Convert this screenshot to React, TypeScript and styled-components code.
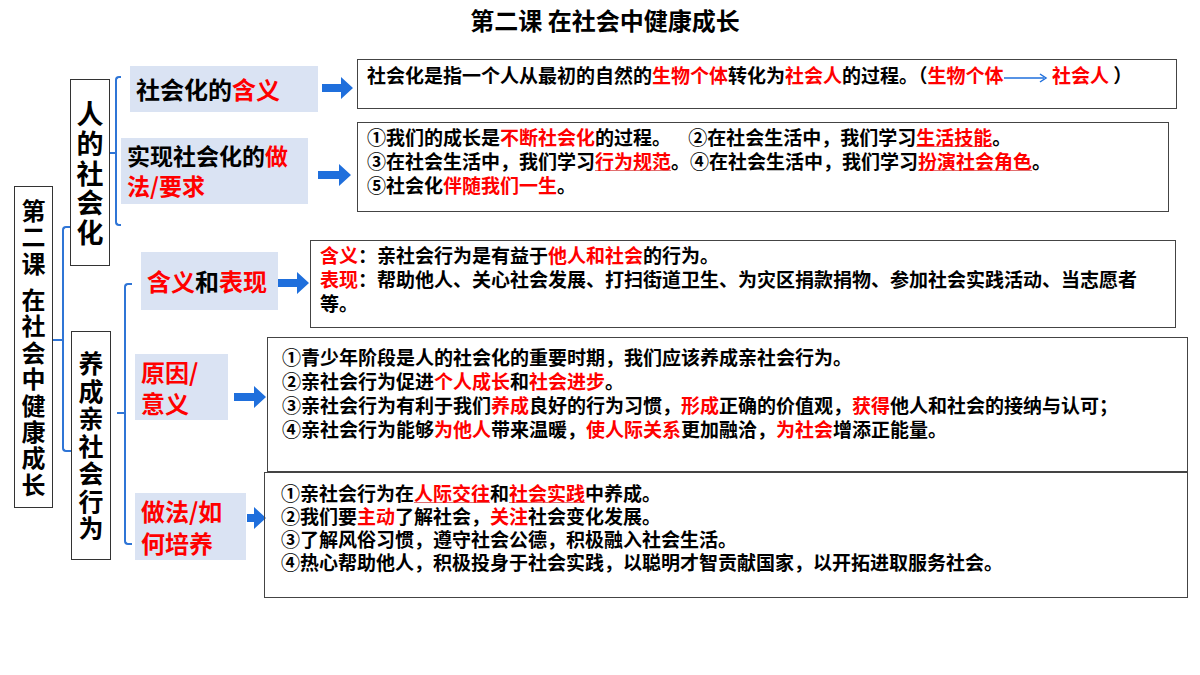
import * as React from 'react';
import styled, { createGlobalStyle } from 'styled-components';

const Global = createGlobalStyle`
  html, body { margin: 0; background: #fff; }
  body { font-family: "Noto Sans CJK SC", "Liberation Sans", sans-serif; }
`;

const Slide = styled.div`
  position: relative;
  width: 1200px;
  height: 675px;
  overflow: hidden;
  background: #fff;
`;

const Title = styled.h1`
  margin: 0;
  padding-top: 2px;
  padding-left: 10px;
  text-align: center;
  font-size: 24px;
  font-weight: 700;
  color: #000;
`;

const Node = styled.div<{ x: number; y: number; w: number; h: number }>`
  position: absolute;
  left: ${p => p.x}px;
  top: ${p => p.y}px;
  width: ${p => p.w}px;
  height: ${p => p.h}px;
  box-sizing: border-box;
`;

const VBox = styled(Node)<{ size: number }>`
  border: 1.5px solid #333;
  display: flex;
  align-items: center;
  justify-content: center;
  font-size: ${p => p.size}px;
  font-weight: 700;
  line-height: 1.1;
  text-align: center;
  & span { display: block; width: 1em; }
`;

const Label = styled(Node)<{ size: number }>`
  background: #dae3f3;
  font-size: ${p => p.size}px;
  font-weight: 700;
  line-height: 1.3;
  padding: 4px 6px;
  display: flex;
  align-items: center;
  white-space: nowrap;
`;

const TextBox = styled(Node)<{ lh: number }>`
  border: 1.5px solid #444;
  padding: 2px 9px;
  font-size: 19px;
  font-weight: 700;
  line-height: ${p => p.lh}px;
  color: #000;
`;

const Red = styled.span<{ u?: boolean }>`
  color: #ff0000;
  text-decoration: ${p => (p.u ? 'underline' : 'none')};
  text-decoration-color: #e07070;
`;

const Bracket = styled(Node)`
  border: 2px solid #2f75d6;
  border-right: none;
  border-radius: 4px 0 0 4px;
`;

const Tick = styled(Node)`
  background: #2f75d6;
`;

const Arrow = ({ x, y, w }: { x: number; y: number; w: number }) => (
  <Node x={x} y={y - 12} w={w} h={24}>
    <svg width={w} height={24} viewBox={`0 0 ${w} 24`}>
      <polygon points={`0,8 ${w - 12},8 ${w - 12},1 ${w},12 ${w - 12},23 ${w - 12},16 0,16`} fill="#1f6fdc" />
    </svg>
  </Node>
);

const Vert = ({ text }: { text: string }) => <>{text.split('').map((c, i) => <span key={i}>{c}</span>)}</>;

export default function App() {
  return (
    <Slide>
      <Global />
      <Title>第二课 在社会中健康成长</Title>

      <VBox x={14} y={186} w={39} h={322} size={24}><div><Vert text="第二课" /><span style={{ height: 10 }} /><Vert text="在社会中健康成长" /></div></VBox>
      <Bracket x={62} y={226} w={9} h={226} />
      <Tick x={53} y={339} w={9} h={2} />

      <VBox x={70} y={79} w={40} h={187} size={27}><div><Vert text="人的社会化" /></div></VBox>
      <VBox x={71} y={331} w={40} h={229} size={25}><div><Vert text="养成亲社会行为" /></div></VBox>

      <Bracket x={115} y={76} w={6} h={150} />
      <Tick x={110} y={152} w={5} h={2} />
      <Bracket x={124} y={283} w={8} h={262} />
      <Tick x={117} y={412} w={7} h={2} />

      <Label x={130} y={66} w={188} h={46} size={24}>社会化的<Red>含义</Red></Label>
      <Label x={121} y={138} w={187} h={66} size={23}><div>实现社会化的<Red>做</Red><br /><Red>法/要求</Red></div></Label>
      <Label x={141} y={252} w={137} h={58} size={24}><div><Red>含义</Red>和<Red>表现</Red></div></Label>
      <Label x={135} y={354} w={93} h={66} size={24}><div><Red>原因/</Red><br /><Red>意义</Red></div></Label>
      <Label x={135} y={493} w={111} h={67} size={24}><div><Red>做法/如</Red><br /><Red>何培养</Red></div></Label>

      <Arrow x={322} y={88} w={31} />
      <Arrow x={318} y={175} w={33} />
      <Arrow x={278} y={283} w={31} />
      <Arrow x={234} y={397} w={32} />
      <Arrow x={247} y={518} w={19} />

      <TextBox x={357} y={59} w={820} h={50} lh={26}>
        社会化是指一个人从最初的自然的<Red>生物个体</Red>转化为<Red>社会人</Red>的过程。（<Red>生物个体</Red>
        <svg width="44" height="10" viewBox="0 0 44 10" style={{ verticalAlign: 'middle' }}><line x1="0" y1="5" x2="40" y2="5" stroke="#1f6fdc" strokeWidth="1.5" /><polyline points="36,1 42,5 36,9" fill="none" stroke="#1f6fdc" strokeWidth="1.5" /></svg>
        &nbsp;<Red>社会人</Red> ）
      </TextBox>
      <TextBox x={357} y={122} w={812} h={90} lh={24}>
        ①我们的成长是<Red>不断社会化</Red>的过程。&nbsp;&nbsp;&nbsp;&nbsp;②在社会生活中，我们学习<Red u>生活技能</Red>。<br />
        ③在社会生活中，我们学习<Red u>行为规范</Red>。④在社会生活中，我们学习<Red u>扮演社会角色</Red>。<br />
        ⑤社会化<Red>伴随我们一生</Red>。
      </TextBox>
      <TextBox x={310} y={240} w={866} h={88} lh={24}>
        <Red>含义</Red>：亲社会行为是有益于<Red>他人和社会</Red>的行为。<br />
        <Red>表现</Red>：帮助他人、关心社会发展、打扫街道卫生、为灾区捐款捐物、参加社会实践活动、当志愿者等。
      </TextBox>
      <TextBox x={267} y={337} w={921} h={135} lh={24} style={{ paddingTop: 7, paddingLeft: 14 }}>
        ①青少年阶段是人的社会化的重要时期，我们应该养成亲社会行为。<br />
        ②亲社会行为促进<Red>个人成长</Red>和<Red>社会进步</Red>。<br />
        ③亲社会行为有利于我们<Red>养成</Red>良好的行为习惯，<Red>形成</Red>正确的价值观，<Red>获得</Red>他人和社会的接纳与认可；<br />
        ④亲社会行为能够<Red>为他人</Red>带来温暖，<Red>使人际关系</Red>更加融洽，<Red>为社会</Red>增添正能量。
      </TextBox>
      <TextBox x={264} y={472} w={924} h={126} lh={23} style={{ paddingTop: 8, paddingLeft: 16 }}>
        ①亲社会行为在<Red u>人际交往</Red>和<Red u>社会实践</Red>中养成。<br />
        ②我们要<Red>主动</Red>了解社会，<Red>关注</Red>社会变化发展。<br />
        ③了解风俗习惯，遵守社会公德，积极融入社会生活。<br />
        ④热心帮助他人，积极投身于社会实践，以聪明才智贡献国家，以开拓进取服务社会。
      </TextBox>
    </Slide>
  );
}
